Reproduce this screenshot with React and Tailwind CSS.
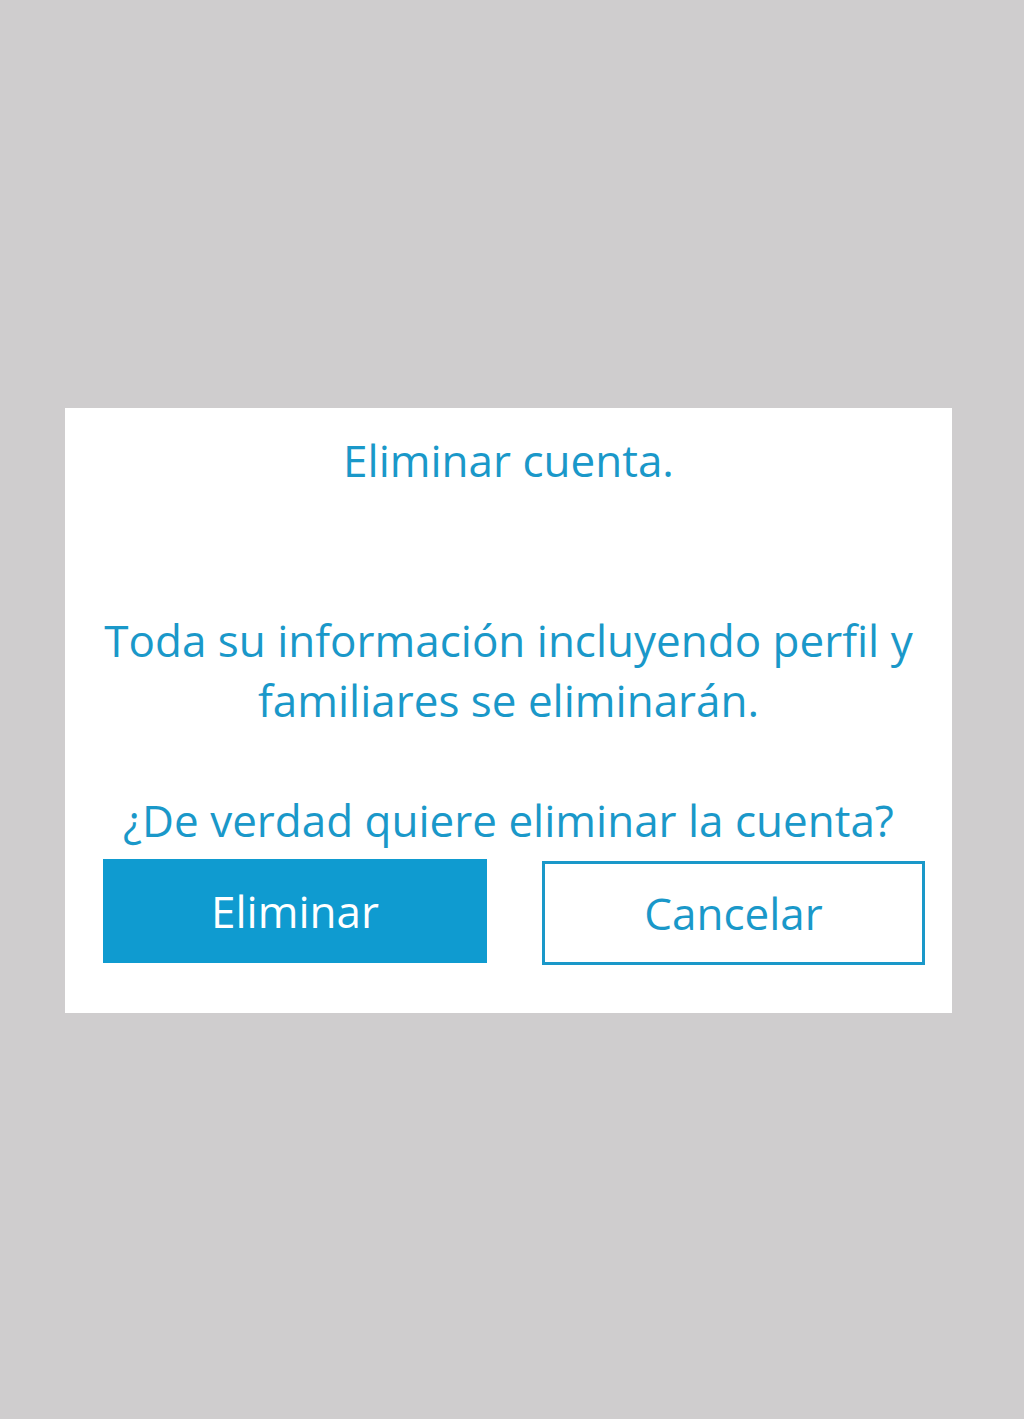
export default function App() {
  return (
    <div className="min-h-[1419px] bg-[#cfcdce] pt-[408px]" style={{ fontFamily: '"Open Sans", "Noto Sans", sans-serif' }}>
      <div className="ml-[65px] w-[887px] bg-white px-[27px] pt-[22px] pb-[48px] text-[#1a98c9]">
        <h2 className="text-center text-[44px] leading-[60px]">Eliminar cuenta.</h2>
        <p className="mt-[120px] text-center text-[44px] leading-[60px]">
          Toda su información incluyendo perfil y
          <br />
          familiares se eliminarán.
        </p>
        <p className="mt-[60px] text-center text-[44px] leading-[60px]">¿De verdad quiere eliminar la cuenta?</p>
        <div className="mt-[9px] ml-[11px] flex gap-[55px]">
          <button className="h-[104px] w-[384px] bg-[#0f9bd0] text-[44px] text-white">Eliminar</button>
          <button className="mt-[2px] h-[104px] w-[383px] border-[3px] border-[#1a98c9] bg-white text-[44px] text-[#1a98c9]">
            Cancelar
          </button>
        </div>
      </div>
    </div>
  );
}
